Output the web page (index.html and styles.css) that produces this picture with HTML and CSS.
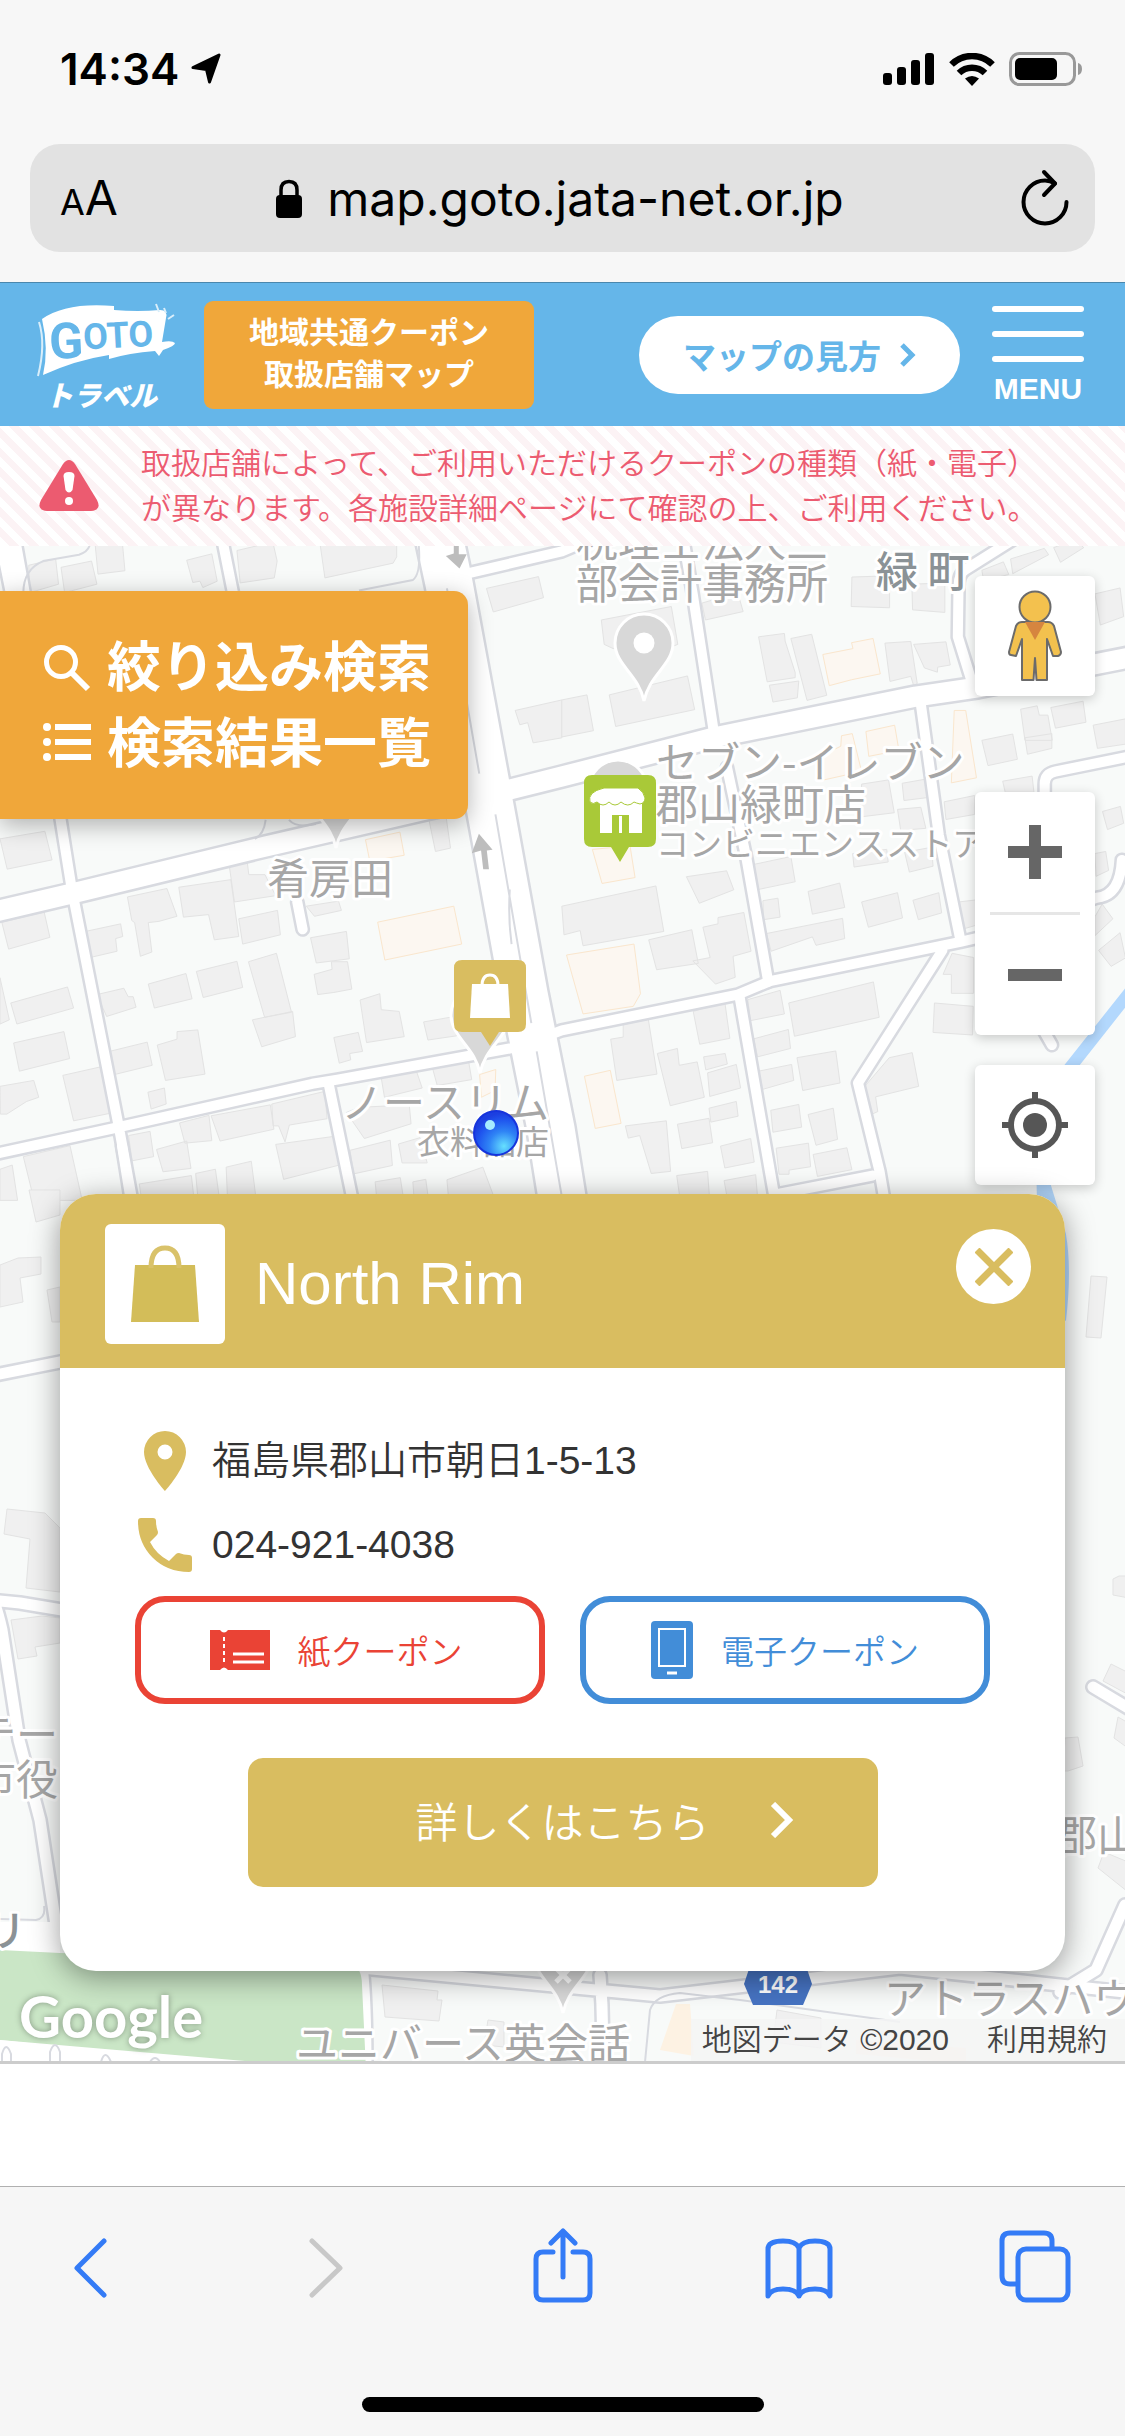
FILE: index.html
```html
<!DOCTYPE html>
<html lang="ja">
<head>
<meta charset="utf-8">
<meta name="viewport" content="width=device-width, initial-scale=1">
<title>地域共通クーポン 取扱店舗マップ</title>
<link rel="stylesheet" href="styles.css">
</head>
<body>
<div class="screen">
  <div class="chrome">
    <div class="status">
      <span class="clock">14:34</span>
      <svg width="30" height="32" viewBox="0 0 30 32"><path d="M28 2 18.500 29 15.500 16.500 2 14.500z" stroke="#000" stroke-width="3" stroke-linejoin="round"/></svg>
      <span class="grow"></span>
      <svg width="52" height="32" viewBox="0 0 52 32"><rect x="0" y="20" width="9" height="12" rx="3"/><rect x="14" y="14" width="9" height="18" rx="3"/><rect x="28" y="7" width="9" height="25" rx="3"/><rect x="42" y="0" width="9" height="32" rx="3"/></svg>
      <svg class="wifi" width="46" height="33" viewBox="0 0 46 33"><g fill="none" stroke="#000" stroke-width="6.500"><path d="M2.500 11.500a29 29 0 0 1 41 0"/><path d="M10 20a18.500 18.500 0 0 1 26 0"/></g><path d="M23 33l-7-7.500q7-5 14 0z"/></svg>
      <svg width="74" height="34" viewBox="0 0 74 34"><rect x="1.500" y="1.500" width="64" height="31" rx="9" fill="none" stroke="#999" stroke-width="3"/><rect x="6" y="6" width="42" height="22" rx="5"/><path d="M69 11q4 1 4 6t-4 6z" fill="#999"/></svg>
    </div>
    <div class="urlbar">
      <button class="aa" type="button" aria-label="表示設定"><span class="aa-s">A</span>A</button>
      <div class="url">
        <svg width="28" height="40" viewBox="0 0 28 40"><rect x="1" y="16" width="26" height="23" rx="4"/><path d="M6 18V11q0-8.500 8-8.500T22 11v7" fill="none" stroke="#000" stroke-width="3.500"/></svg>
        <span>map.goto.jata-net.or.jp</span>
      </div>
      <button class="plain" type="button" aria-label="再読み込み"><svg width="48" height="58" viewBox="0 0 48 58" fill="none" stroke="#000" stroke-width="4" stroke-linecap="round" stroke-linejoin="round"><path d="M34 14.500Q29 11.500 24 11.500A21.500 21.500 0 1 0 45.500 33"/><path d="M23 3l11 11.500L23 26"/></svg></button>
    </div>
  </div>

  <header class="site">
    <a class="logo" href="#" aria-label="GoTo トラベル">
      <svg width="150" height="112" viewBox="0 0 150 112">
        <path d="M6 20Q30 3 78 7l0 4q24 2 46 0 8 0 6 8l-4 24q10-2 13 1 0 3-12 7l-4 6-4-5q-26 2-46 8l0-4Q40 61 7 76q6-26-1-56z" fill="#fff"/>
        <path d="M3 23q7 22-1 54M120 5l3 8M128 9l2 5M138 16l-6 4" fill="none" stroke="#d9eefa" stroke-width="2"/>
        <text class="logo-en" transform="rotate(-3 20 60)" x="14" y="60">G<tspan class="logo-sm" dy="-8">OTO</tspan></text>
        <text class="logo-ja" x="9" y="107">トラベル</text>
      </svg>
    </a>
    <h1 class="badge">地域共通クーポン<br>取扱店舗マップ</h1>
    <span class="grow"></span>
    <a class="howto" href="#">マップの見方 <svg width="17" height="26" viewBox="0 0 17 26"><path d="M3 3l10 10L3 23" fill="none" stroke="#65b6e9" stroke-width="5"/></svg></a>
    <button class="menu" type="button"><i></i><i></i><i></i>MENU</button>
  </header>

  <p class="notice">
    <svg width="60" height="52" viewBox="0 0 60 52"><path d="M24 4q6-8 12 0l22 36q5 10-6 11H8Q-3 50 2 40z" fill="#ec5b70"/><path d="M24.500 16q0-4 5.500-4t5.500 4l-2 14q-3.500 5-7 0z" fill="#fff"/><circle cx="30" cy="41" r="4" fill="#fff"/></svg>
    <span>取扱店舗によって、ご利用いただけるクーポンの種類（紙・電子）<br>が異なります。各施設詳細ページにて確認の上、ご利用ください。</span>
  </p>

  <main class="map">
    <svg class="map-art" viewBox="0 546 1125 1515" preserveAspectRatio="xMinYMin slice" aria-hidden="true">
      <defs>
        <g id="main-road"><path d="M1215-40L1250 100 1375 680 1460 1080 1535 1400 1580 1640"/></g>
        <g id="cross-road"><path d="M-20 884L200 840 740 728 1340 610 1565 562 1995 468 2550 372 2725 350 3200 270"/><path d="M10-20L90 320M20-40L60 150"/></g>
        <g id="streets">
          <path d="M140 520L168 660 200 830 330 1390 375 1600M-20 1460L320 1397 870 1292 940 1282 1440 1205 1565 1165 2055 1080 2145 1048 2675 955 2750 940 3055 850Q3120 845 3125 760M915 1290L990 1600M610-40L650 130M1300 80L1565 27 1640 0"/>
          <path d="M1900-20L1930 130 1990 465M2025 540L2080 760 2140 1050M2565 390L2615 700 2675 950M2060 1085L2165 1600M2625 975L2390 1290 2450 1500 2470 1600M2160 1555L2430 1510M2830-5L2690 70Q2670 80 2670 110L2668 230 2710 345M2910 640V580Q2910 555 2940 550L3200 505M2890 1140L2930 1200"/>
          <path d="M828 860L843 925M370 1600L340 1440"/>
        </g>
        <g id="lower-streets">
          <path d="M-10 1376L70 1360M-10 1600L20 1603 80 1613M-6 1602Q-2 1612 2 1630L19 1740 40 1820 56 1925M1093 1687L1140 1715M1125 1905L1096 1970 1060 1992M360 1950Q366 1985 366 2070M340 1966L660 1996 900 1968 1125 1992M600 1975Q604 2020 602 2070"/>
        </g>
      </defs>
      <rect y="540" width="1125" height="1530" fill="#f8faf9"/>
      <g transform="translate(0 540) scale(.359 .4209)">
        <g class="bld">
          <path d="M80 60l75-15 8 60-80 20zM170 65l85-15 15 55-90 20zM265 10l75-12 8 75-75 8zM520 48l70-15 15 65-40 15-8-15-20 3zM660 25l100-20 12 45-8 40-95 12zM890 0h215v40l-10 15-190 35zM1355 115l145-28 14 50-140 34zM1435 405l130-25v90l-80 12-15-48-22 5zM0 710l125-18 20 68-125 22zM5 908l118-24 16 60-115 28zM355 848l110-20 28 66-50 12-30 3 10 70-32 10-16-80-8-5zM498 825l145-18 22 135-68 8-16-60-70 6zM638 770l50-10 5 35 45 0 30 50-115 15zM665 900l108-20 8 58-105 22zM238 930l98-18 6 30-20 5 4 30-75 15zM865 945l100-15 8 65-92 10zM875 1032l50-12-2-18 45 0 12 65-50 8-45 5zM853 870l90-12 8 22-75 14zM30 1100l158-38 17 50-158 38zM38 1195l140-27 16 64-140 30zM270 1080l75-15 12 20 14 0 8 25-82 22zM413 1055l105-25 17 60-105 22zM547 1025l113-24 16 62-110 24zM692 1002l78-20 42 140-75 12zM703 1140l112-20 8 60-94 24zM1003 1093l55-15 4 38 50 4 14 60-105 14zM1180 1145l80-12 12 45-80 10zM930 1182l68-12 12 45-36 5 3 15-32 8zM305 1215l105-22 14 55-105 22zM438 1200l55-14v-18l58-4 20 105-110 15zM0 1298l94-14 14 40-34 10-55 30-18 0zM175 1272l104-20 28 110-102 18zM412 1312l46-10 5 38-42 12zM65 1465l130-26 34 130H95zM0 1495l34-10 15 84H0zM358 1415l60-10 10 60-60 10zM500 1385l82-18 8 60-75 6zM588 1368l165-26 10 58-150 28zM757 1340l148-30 6 65-105 15-12 40-18-38-15 0zM436 1448l84-20 12 65-78 8zM768 1436l170-20 12 68-160 35zM965 1360l35-12 140-6 5 45-130 35zM975 1450l112-24 6 60-108 20zM1110 1435l60-15 20 60-70 0zM1060 1268l96-16 20 50-105 22zM1200 1240l104-8 10 50-96 14zM1195 665l48-5 12 72-42 8zM388 1530l145-20 8 60H395zM545 1505l55-10 12 75h-60zM630 1490l70-14 14 94h-80zM1045 1525l70-10 10 55h-75zM1150 1525l36-6 8 51h-40zM1245 1520l100-30 35 80h-130zM0 1040l26 100-26 10z"/>
        </g>
        <g class="bld" transform="translate(1565 0)">
          <path d="M110 190l195-32 18 90-30 10-150 0-25-10zM390 150l100-25 15 45-105 20zM132 368l218-45 20 80-220 40zM0 380l70-12 18 85-88 15zM808 88l105-3v76l-107-3zM975 105l92-3v70l-90-6zM548 230l72-8 2 18 28 75 0 12-78 10zM638 234l58-10 42 145-55 12zM578 345l82-10-4 40-68 10zM900 245l72-4 18 100-10 5-8-22-58 12zM980 248l90-6 12 55-35 5-1 12-36-10zM1170 476l86-15 13 60-82 15zM1278 402l46-8 6 22 24 0 12 60-76 0zM1362 398l90-15 8 50-85 14zM1290 470l75-10v35l-68 14zM1480 440l90-15v60l-78 10zM1228 573l82-12 5 38h-80zM1250 45l94-25 12 15-100 45zM1370 18l60-18 24 18-65 35zM1485 128l70-14 10 68-65 20zM1170 72l60-20 15 30-70 15zM1506 645l50-12 9 40-45 15zM1485 745l30-5 8 45-35 14zM1485 895l20-30 30 35-50 40zM1495 975l60-42 15 60-40 20zM1065 622l85-15v45l-80 12zM948 578l80-12v45l-75 8zM935 640l65-5 14 50-70 5zM835 580l75-10 16 78-95 10zM528 772l110-20 12 60-112 20zM347 800l112-14 20 45-96 32zM955 742l75-12 4 45-66 14zM810 745l95-10 4 30-95 12zM560 857l42-6 6 45-46 6zM686 835l88-20 14 58-90 16zM835 860l100-22 14 60-95 22zM978 856l72-18 8 48-65 16zM0 870l262-48 22 108-225 34-8-36-45 10zM242 950l120-24 18 80-116 15zM365 1000l48-8-20-72 42-8 0-15 72-12 20 92-50 12 6 50-55 16zM570 935l212-36 6 48-80 16-10-20-115 34zM632 1100l236-50 16 84-236 45zM518 1092l90-22 12 56-95 16zM535 1185l96-22 6 45-92 20zM548 1262l92-16 6 38-90 22zM655 1230l108-16 12 76-104 18zM366 1120l88-22 14 86-84 14zM136 1186l35-5v-30l70-12 24 130-112 15zM266 1220l56-12 5 40 50-8 20 84-95 20zM395 1228l60-8 6 25-60 14zM406 1266l80-20 12 56-86 20zM410 1350l76-16 5 35-76 14zM322 1388l88-14 10 58-86 14zM177 1392l114-12 12 120-54 5-32-90-32 6zM442 1440l84-18 10 56-82 14zM582 1355l78-14 8 54-80 12zM686 1365l70-15 12 74-60 14zM700 1460l94-16 14 52-96 16zM597 1445l90-12 6 56-60 8v10h-28zM320 1510l86-10 6 70h-82zM452 1522l88-14 6 62h-84zM842 1300l70-70 64-12 18 80-120 25 6 35-16 6zM1038 1100l108 8-2 68-110-6zM1062 1032l25-50 60 10v85h-62v-45zM1105 860l50-5v60l-40 10z"/>
        </g>
        <g class="shop">
          <path d="M1018 712l96-18 12 55-96 14zM1052 908l212-38 22 90-214 38zM1336 1270l45-12-2 50-38 16zM2292 272l84-14-4-14 60-10 20 84-80 14-62 14zM2412 455l80-15 12 60-84 14zM2270 520l72-30 2-25 30-5 26 90-105 20zM2658 405h32l30 160-70 12zM1650 735l105-8 14 75-92 14zM1578 986l188-26 18 118-20 30-140 18zM1628 1274l72-14 30 126-72 12z"/>
        </g>
        <g class="casing"><use href="#main-road" stroke-width="52"/><use href="#cross-road" stroke-width="25"/><use href="#streets" stroke-width="15"/></g>
        <g class="paving"><use href="#main-road" stroke-width="47"/><use href="#cross-road" stroke-width="20"/><use href="#streets" stroke-width="10"/></g>
        <g class="kerb"><path d="M65 125Q65 70 120 50L220 35Q245 28 250 12M1165 0Q1175 80 1150 95L1000 120M1245 115L1335 555M1380 652L1480 1148M1420 830Q1415 900 1425 960M1495 1215L1565 1560M805 665q20 20 75 10M740 665Q735 700 710 710"/></g>
        <path class="river" d="M3160 1060L2970 1265 2900 1400 2905 1560"/>
        <g fill="#bdbdbd"><path d="M1264 14h14v20h22l-20 34-38-30 22-6zM1334 698l38 38-16 2 6 44h-16l-6-44-26 6z"/></g>
      </g>
      <path class="river" d="M1043 1180L1060 1235Q1066 1270 1060 1320"/>
      <g class="bld">
        <path d="M29 1190h31v25l-24 7zM18 1258l23-1v17l-21 4 3 24-23 5v-42zM47 1290l13-3v35h-8zM7 1509l38 4 15 15v64l-34-4 4-49-26-5zM11 1620l31-4 18 2v25l-25 4 2 9-19 3zM1091 1276l16 1-6 61-15-1zM1113 1579l6-3h10v22l-16-3zM1103 1681l8-17 20 10v22zM1118 1717l14 8v26l-18-13zM1065 1738l13-1 5 29-15 5-5 0zM1104 1852l24 10v30l-30-24zM382 1985l56 6-1 9h5l-3 21-54-4zM488 2020l16 2v25l-20-2zM777 2010l44 8v30l-48-6z"/>
      </g>
      <g class="casing"><use href="#lower-streets" stroke-width="16"/></g>
      <g class="paving"><use href="#lower-streets" stroke-width="11"/></g>
      <path d="M0 1922L60 1922V1956H0z" fill="#fff"/>
      <path d="M0 1950L60 1953 350 1960Q362 1968 362 1985L366 2070H280L0 2040z" fill="#cae6c6"/>
      <path d="M0 2040L280 2064V2070H0z" fill="#fff"/>
      <g class="kerb"><path d="M0 1919L36 1920Q46 1918 44 1906M2 2062v-8q4-14 9 0v8M50 2062v-10q5-14 10 0v10M101 2062q4-14 10 0M150 2062q5-8 10 0M645 2062L650 2010Q655 1995 680 1993L740 2000 900 2022"/></g>
      <path d="M676 2004h14l4 52-34-6zM856 2040l110 8v16l-110-10z" class="shopfill"/>

      <g class="poi">
        <path id="pin" d="M644 614a29 29 0 0 1 29 29c0 22-24 32-29 58-5-26-29-36-29-58a29 29 0 0 1 29-29z"/><circle cx="644" cy="643" r="10.500" fill="#fff" stroke="none"/>
        <use href="#pin" x="-308" y="147"/><use href="#pin" x="-164" y="372"/><use href="#pin" x="-26" y="146"/><use href="#pin" x="-81" y="1312"/>
      </g>
      <path d="M554 1966l9 9 9-9M556 1982l7-7 7 7" fill="none" stroke="#fff" stroke-width="5"/>
      <g class="label">
        <text x="576" y="557">税理士法人三</text><text x="576" y="599">部会計事務所</text>
        <text x="267" y="894">肴房田</text><text x="341" y="1118">ノースリム</text><text class="sub" x="417" y="1154">衣料品店</text>
        <text x="656" y="778">セブン-イレブン</text><text x="656" y="820">郡山緑町店</text><text class="sub" x="656" y="856">コンビニエンスストア</text>
        <text x="-26" y="1750">テー</text><text x="-26" y="1795">市役</text><text x="1055" y="1851">郡山</text>
        <text x="884" y="2014">アトラスハウス</text><text x="296" y="2059">ユニバース英会話</text>
        <text class="town" x="876" y="587">緑 町</text><text class="town" x="-16" y="1946">リ</text>
      </g>
      <path d="M752 1960h52l8 24-9 21h-50l-9-21z" fill="#4673c2"/><text class="route" x="778" y="1993">142</text>

      <path d="M592 775h56q8 0 8 8v56q0 8-8 8h-19l-9 15-9-15h-19q-8 0-8-8v-56q0-8 8-8z" fill="#a9c938"/>
      <path d="M600 801h42v32h-13v-18h-17v18h-12z" fill="#fff"/><path d="M604 788h34q6 4 7 10 0 5-5 6-4-1-6-2-6 6-13 0-6 6-12 0-6 6-12 0-4 3-7 0-3-10 14-14z" fill="#fff" stroke="#a9c938"/><path d="M619 816h3v17h-3z" fill="#fff"/>
      <path d="M462 960h56q8 0 8 8v56q0 8-8 8h-19l-9 14-9-14h-19q-8 0-8-8v-56q0-8 8-8z" fill="#d9bd60"/>
      <path d="M472 984h36l2 34h-40z" fill="#fff"/><path d="M482 986q0-11 8-11t8 11" fill="none" stroke="#fff" stroke-width="3"/>
      <defs><radialGradient id="ball" cx=".68" cy=".8" r=".75"><stop offset="0" stop-color="#66e0ff"/><stop offset=".45" stop-color="#2f84f5"/><stop offset=".8" stop-color="#1f55ee"/><stop offset="1" stop-color="#1c3fe0"/></radialGradient></defs>
      <circle cx="496" cy="1133" r="22" fill="url(#ball)" stroke="#1634dc" stroke-width="2"/><circle cx="490" cy="1125" r="5" fill="#a5ecff"/>
    </svg>

    <div class="overlay-top">
      <nav class="finder">
        <a href="#"><svg width="50" height="50" viewBox="0 0 50 50" fill="none" stroke="#fff"><circle cx="18" cy="19" r="14.500" stroke-width="5"/><path d="M28 29l17 17" stroke-width="6"/></svg>絞り込み検索</a>
        <a href="#"><svg width="50" height="50" viewBox="0 0 50 50" fill="#fff"><circle cx="4" cy="8" r="4"/><circle cx="4" cy="23" r="4"/><circle cx="4" cy="38" r="4"/><path d="M12 5h36v6H12zM12 20h36v6H12zM12 35h36v6H12z"/></svg>検索結果一覧</a>
      </nav>
      <div class="controls">
        <button class="ctl" type="button" aria-label="ストリートビュー"><svg width="54" height="92" viewBox="0 0 54 92" fill="#f3c14e" stroke="#6b6b6b" stroke-width="2" stroke-linejoin="round"><path d="M14 32h26q4 0 6 4l7 26q0 3-3 4l-5 0-6-17V90H28.500L27 68 25.500 90H14V49L8 66l-5-1q-2 0-2-3l7-26q2-4 6-4z"/><circle cx="27" cy="17" r="15.500"/><path d="M17 32h20L27 50z" fill="#d6853f" stroke="none"/></svg></button>
        <div class="zoom">
          <button class="ctl-part" type="button" aria-label="拡大"><svg width="54" height="54" viewBox="0 0 54 54"><path d="M21 0h12v21h21v12H33v21H21V33H0V21h21z" fill="#666"/></svg></button>
          <button class="ctl-part" type="button" aria-label="縮小"><svg width="54" height="54" viewBox="0 0 54 54"><path d="M0 21h54v12H0z" fill="#666"/></svg></button>
        </div>
        <button class="ctl" type="button" aria-label="現在地"><svg width="66" height="66" viewBox="0 0 66 66" fill="none" stroke="#565656" stroke-width="6"><circle cx="33" cy="33" r="24"/><circle cx="33" cy="33" r="12" fill="#565656" stroke="none"/><path d="M33 0v8M33 58v8M0 33h8M58 33h8"/></svg></button>
      </div>
    </div>

    <article class="card">
      <header class="card-head">
        <span class="thumb"><svg width="72" height="80" viewBox="0 0 72 80"><path d="M6 21h60l4 57H2z" fill="#d3bd59"/><path d="M22 24Q22 4 36 4T50 24" fill="none" stroke="#d9c26a" stroke-width="5"/></svg></span>
        <h2>North Rim</h2>
        <button class="close" type="button" aria-label="閉じる"><svg width="38" height="38" viewBox="0 0 38 38"><path d="M2 2l34 34M36 2L2 36" stroke="#d9bd60" stroke-width="7"/></svg></button>
      </header>
      <div class="card-body">
        <p class="fact"><svg width="54" height="60" viewBox="0 0 54 60"><path fill-rule="evenodd" d="M27 0a21 21 0 0 1 21 21c0 16-21 39-21 39S6 37 6 21A21 21 0 0 1 27 0zm0 13.500a7.500 7.500 0 1 0 0 15 7.500 7.500 0 0 0 0-15z" fill="#d9bd60"/></svg>福島県郡山市朝日1-5-13</p>
        <p class="fact"><svg width="54" height="54" viewBox="0 0 54 54"><path d="M3 0h12q3 0 3 3 0 6 2 11 0 2-1 3l-7 7q6 12 19 19l7-7q1-1 3-1 5 2 10 2 3 0 3 3v11q0 3-3 3Q29 54 14.500 39.500T0 3Q0 0 3 0z" fill="#d9bd60"/></svg>024-921-4038</p>
        <div class="coupons">
          <span class="coupon paper"><svg width="60" height="40" viewBox="0 0 60 40"><path d="M0 0h10q4 5 8 0h42v40H18q-4-5-8 0H0z" fill="#ea4335"/><path d="M14 7v28" stroke="#fff" stroke-width="2" stroke-dasharray="4 3"/><path d="M23 24h31M23 32h31" stroke="#fff" stroke-width="3"/></svg>紙クーポン</span>
          <span class="coupon digital"><svg width="42" height="58" viewBox="0 0 42 58"><rect width="42" height="58" rx="4" fill="#428dd8"/><rect x="8" y="8" width="26" height="37" fill="none" stroke="#fff" stroke-width="2"/><path d="M16 52h10" stroke="#fff" stroke-width="3"/></svg>電子クーポン</span>
        </div>
        <a class="more" href="#">詳しくはこちら<svg width="24" height="36" viewBox="0 0 24 36"><path d="M3 2l16 16L3 34" fill="none" stroke="#fff" stroke-width="6"/></svg></a>
      </div>
    </article>

    <footer class="map-foot">
      <span class="google">Google</span>
      <span class="terms"><span>地図データ ©2020</span><a href="#">利用規約</a></span>
    </footer>
  </main>

  <div class="blank"></div>

  <nav class="toolbar">
    <div class="tools">
      <button class="plain" type="button" aria-label="戻る"><svg width="72" height="76" viewBox="0 0 72 76"><path d="M50 13L23 40l27 27"/></svg></button>
      <button class="plain" type="button" aria-label="進む" disabled><svg width="72" height="76" viewBox="0 0 72 76"><path d="M22 13l28 27-28 27" class="off"/></svg></button>
      <button class="plain" type="button" aria-label="共有"><svg width="72" height="76" viewBox="0 0 72 76"><path d="M26 24H16q-7 0-7 7v34q0 7 7 7h40q7 0 7-7V31q0-7-7-7H46M36 49V3M24 15L36 3l12 12"/></svg></button>
      <button class="plain" type="button" aria-label="ブックマーク"><svg width="72" height="76" viewBox="0 0 72 76"><path d="M36 20Q33 13 20 13 5 13 5 21V68Q8 61 20 61 33 61 36 68 39 61 52 61 64 61 67 68V21Q67 13 52 13 39 13 36 20zV68"/></svg></button>
      <button class="plain" type="button" aria-label="タブ"><svg width="72" height="76" viewBox="0 0 72 76"><path d="M17 56H11q-8 0-8-8V13q0-8 8-8H45q8 0 8 8v7"/><rect x="19" y="21" width="50" height="51" rx="8"/></svg></button>
    </div>
    <div class="home"></div>
  </nav>
</div>
</body>
</html>
```
FILE: styles.css
```css
* { box-sizing: border-box; }
body, h1, h2, p { margin: 0; }
body {
  background: #fff;
  color: #333;
  font-family: "Liberation Sans", "Noto Sans CJK JP", sans-serif;
}
svg { display: block; flex: none; }
a { color: inherit; text-decoration: none; }
button { font: inherit; color: inherit; border: 0; padding: 0; background: none; }
.screen { display: flex; flex-direction: column; min-height: 100vh; overflow: hidden; }
.grow { flex: 1; }
.plain { display: block; }

/* browser chrome */
.chrome { background: #f7f7f7; padding: 0 30px 30px; border-bottom: 1px solid #4a87ad; color: #000; }
.status { display: flex; align-items: center; gap: 12px; height: 144px; padding: 0 12px 6px 30px; }
.clock { font: 600 44px/52px Inter, sans-serif; }
.status .wifi { margin: 0 2px; }
.urlbar { display: flex; align-items: center; justify-content: space-between; height: 108px; padding: 0 26px 0 30px; border-radius: 30px; background: #e2e2e2; }
.aa { padding-top: 4px; font: 400 48px/60px Inter, sans-serif; }
.aa-s { font-size: 36px; }
.url { display: flex; align-items: center; gap: 24px; margin-right: 20px; padding-top: 2px; font: 400 48px/60px Inter, sans-serif; }

/* site header */
.site { display: flex; align-items: center; height: 143px; padding: 0 36px; background: #65b6e9; color: #fff; }
.logo { margin-right: 18px; }
.logo-en { font: 700 50px Roboto, sans-serif; fill: #65b6e9; }
.logo-sm { font-size: 36px; }
.logo-ja { font: italic 900 28px "Noto Sans CJK JP", sans-serif; fill: #fff; }
.badge { width: 330px; padding: 11px 0 13px; border-radius: 9px; background: #f0a73a; text-align: center; font-size: 30px; line-height: 42px; font-weight: 700; }
.howto { display: flex; align-items: center; justify-content: center; gap: 18px; width: 321px; height: 78px; margin-right: 32px; border-radius: 39px; background: #fff; color: #65b6e9; font-size: 33px; font-weight: 700; }
.menu { display: flex; flex-direction: column; align-items: center; width: 92px; margin-right: 5px; padding-top: 2px; font-size: 30px; line-height: 34px; font-weight: 700; }
.menu i { align-self: stretch; height: 6px; margin-bottom: 19px; border-radius: 3px; background: #fff; }
.menu i:nth-child(3) { margin-bottom: 10px; }

.notice { display: flex; align-items: center; gap: 42px; height: 120px; padding: 0 39px; color: #ec5b70; font-size: 30px; line-height: 45px; font-weight: 350; white-space: nowrap; background: repeating-linear-gradient(45deg, #fff 0 7px, #fcf3f5 7px 14px); }

/* map drawing */
.map { position: relative; border-bottom: 3px solid #ccc; }
.map-art { position: absolute; inset: 0; width: 100%; height: 100%; }
.map-art path { vector-effect: non-scaling-stroke; }
.bld { fill: #f0f0f0; stroke: #e3e3e3; stroke-width: 1; }
.shop { fill: #fcf7f1; stroke: #fae6cd; stroke-width: 1; }
.shopfill { fill: #fdf2e3; }
.casing { fill: none; stroke: #d8dae0; stroke-linecap: round; stroke-linejoin: round; }
.paving { fill: none; stroke: #fff; stroke-linecap: round; stroke-linejoin: round; }
.kerb { fill: none; stroke: #d8dae0; stroke-width: 2; }
.river { fill: none; stroke: #b3d8fd; stroke-width: 12; }
.poi { fill: #d8d8d8; stroke: #fff; stroke-width: 3; }
.label { font: 400 42px "Noto Sans CJK JP", sans-serif; fill: #a6a6a6; stroke: #fff; stroke-width: 6; stroke-linejoin: round; paint-order: stroke; }
.label .sub { font-size: 33px; }
.label .town { font-weight: 500; fill: #8b9296; }
.route { font: 700 24px "Liberation Sans", sans-serif; fill: #fff; text-anchor: middle; }

/* map overlays */
.overlay-top { position: relative; display: flex; justify-content: space-between; align-items: flex-start; padding: 30px 30px 9px 0; }
.finder { display: flex; flex-direction: column; width: 468px; margin-top: 15px; padding: 39px 0 37px 43px; border-radius: 0 14px 14px 0; background: #f0a73a; color: #fff; font-size: 54px; line-height: 76px; font-weight: 700; box-shadow: 0 6px 24px rgba(0, 0, 0, .3); }
.finder a { display: flex; align-items: center; gap: 14px; white-space: nowrap; }
.controls { display: flex; flex-direction: column; gap: 30px; }
.ctl, .zoom { width: 120px; border-radius: 6px; background: #fff; box-shadow: 0 3px 12px rgba(0, 0, 0, .2); }
.ctl, .ctl-part { display: flex; align-items: center; justify-content: center; height: 120px; }
.zoom { margin-top: 66px; padding: 0 15px; }
.ctl-part { width: 90px; }
.ctl-part + .ctl-part { height: 123px; border-top: 3px solid #e6e6e6; }

.card { position: relative; margin: 0 60px; border-radius: 36px; overflow: hidden; background: #fff; box-shadow: 0 6px 30px rgba(0, 0, 0, .4); }
.card-head { display: flex; align-items: center; gap: 30px; height: 174px; padding: 6px 34px 0 45px; background: #d9bd60; color: #fff; }
.card-head h2 { flex: 1; font-size: 60px; line-height: 72px; font-weight: 400; }
.thumb { display: flex; align-items: center; justify-content: center; width: 120px; height: 120px; border-radius: 6px; background: #fff; }
.close { display: flex; align-items: center; justify-content: center; align-self: flex-start; width: 75px; height: 75px; margin-top: 29px; border-radius: 50%; background: #fff; }
.card-body { padding: 51px 75px 84px; }
.fact { display: flex; align-items: center; gap: 20px; height: 84px; padding-left: 3px; font-size: 39px; line-height: 60px; font-weight: 350; }
.coupons { display: grid; grid-template-columns: 1fr 1fr; gap: 35px; margin-top: 9px; }
.coupon { display: flex; align-items: center; justify-content: center; gap: 28px; height: 108px; border: 6px solid; border-radius: 30px; font-size: 33px; font-weight: 350; }
.paper { padding-right: 8px; border-color: #ea4335; color: #ea4335; }
.digital { border-color: #428dd8; color: #428dd8; }
.more { display: flex; align-items: center; justify-content: flex-end; gap: 60px; width: 630px; max-width: 100%; height: 129px; margin: 54px auto 0; padding: 0 84px 6px 0; border-radius: 15px; background: #d9bd60; color: #fff; font-size: 42px; font-weight: 350; }

.map-foot { position: relative; display: flex; justify-content: space-between; align-items: flex-end; height: 90px; }
.google { padding-left: 19px; color: #fff; font: 700 58px/60px Lato, sans-serif; align-self: center; text-shadow: 0 0 6px rgba(0, 0, 0, .35); }
.terms { display: flex; gap: 38px; padding: 0 18px 0 11px; background: rgba(245, 245, 245, .85); color: #444; font-size: 30px; line-height: 42px; font-weight: 350; }

.blank { flex: 1; min-height: 120px; }

/* bottom toolbar */
.toolbar { height: 250px; padding: 41px 54px 0; border-top: 1px solid #b0b0b0; background: #f6f6f6; }
.tools { display: flex; justify-content: space-between; }
.tools svg { fill: none; stroke: #347bf6; stroke-width: 5; stroke-linecap: round; stroke-linejoin: round; }
.tools .off { stroke: #c8c8c8; }
.home { width: 402px; height: 15px; margin: 93px auto 0; border-radius: 8px; background: #000; }
```
